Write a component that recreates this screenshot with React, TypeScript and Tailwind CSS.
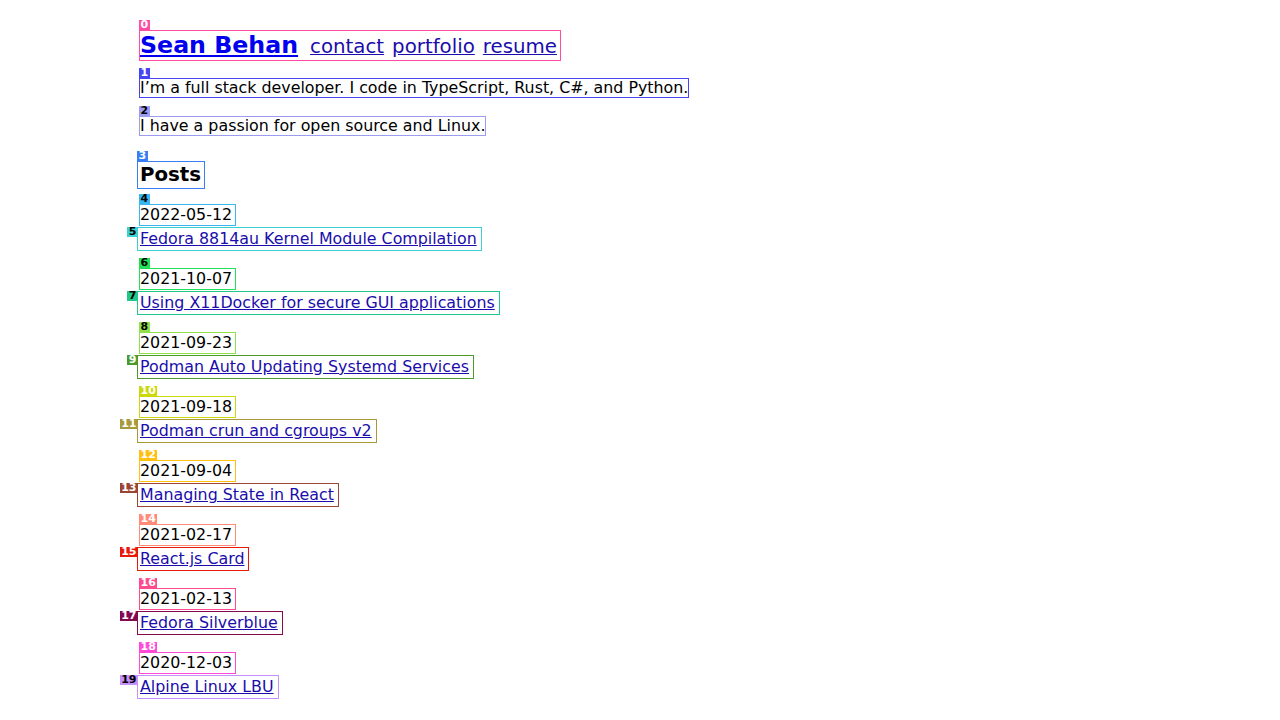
import React from "react";

type MarkProps = {
  n: number;
  box: string;
  label: string;
  side: "top" | "left";
  className?: string;
  children: React.ReactNode;
};

function Mark({ n, box, label, side, className, children }: MarkProps) {
  return (
    <div className={`relative border ${box} ${className ?? ""}`}>
      {children}
      <span
        className={`absolute flex h-[10px] items-center px-[1.5px] text-[11px] leading-[10px] font-bold tracking-normal ${label} ${
          side === "top" ? "left-[-1px] top-[-11px]" : "right-full top-[-1px]"
        }`}
      >
        {n}
      </span>
    </div>
  );
}

const posts = [
  {
    date: "2022-05-12",
    title: "Fedora 8814au Kernel Module Compilation",
    d: { box: "border-[#38b6f0]", label: "bg-[#38b6f0] text-black", side: "top" as const },
    l: { box: "border-[#3cd0d0]", label: "bg-[#3cd0d0] text-black", side: "left" as const },
  },
  {
    date: "2021-10-07",
    title: "Using X11Docker for secure GUI applications",
    d: { box: "border-[#22e055]", label: "bg-[#22e055] text-black", side: "top" as const },
    l: { box: "border-[#22c88a]", label: "bg-[#22c88a] text-black", side: "left" as const },
  },
  {
    date: "2021-09-23",
    title: "Podman Auto Updating Systemd Services",
    d: { box: "border-[#8fe04a]", label: "bg-[#8fe04a] text-black", side: "top" as const },
    l: { box: "border-[#4c9a2a]", label: "bg-[#4c9a2a] text-white", side: "left" as const },
  },
  {
    date: "2021-09-18",
    title: "Podman crun and cgroups v2",
    d: { box: "border-[#ccd80a]", label: "bg-[#ccd80a] text-white", side: "top" as const },
    l: { box: "border-[#a89a3a]", label: "bg-[#a89a3a] text-white", side: "left" as const },
  },
  {
    date: "2021-09-04",
    title: "Managing State in React",
    d: { box: "border-[#ffc010]", label: "bg-[#ffc010] text-white", side: "top" as const },
    l: { box: "border-[#9a4536]", label: "bg-[#9a4536] text-white", side: "left" as const },
  },
  {
    date: "2021-02-17",
    title: "React.js Card",
    d: { box: "border-[#ff8a78]", label: "bg-[#ff8a78] text-white", side: "top" as const },
    l: { box: "border-[#e81a08]", label: "bg-[#e81a08] text-white", side: "left" as const },
  },
  {
    date: "2021-02-13",
    title: "Fedora Silverblue",
    d: { box: "border-[#ff4a8c]", label: "bg-[#ff4a8c] text-white", side: "top" as const },
    l: { box: "border-[#840a50]", label: "bg-[#840a50] text-white", side: "left" as const },
  },
  {
    date: "2020-12-03",
    title: "Alpine Linux LBU",
    d: { box: "border-[#ff4ad8]", label: "bg-[#ff4ad8] text-white", side: "top" as const },
    l: { box: "border-[#c690ff]", label: "bg-[#c690ff] text-black", side: "left" as const },
  },
];

export default function App() {
  return (
    <div className="min-h-[720px] bg-white pl-[139px] pt-[30px] font-['DejaVu_Sans',sans-serif] text-black">
      <div className="flex flex-col items-start">
        <Mark n={0} box="border-[#ff4da6]" label="bg-[#ff4da6] text-white" side="top" className="flex h-[31px] items-baseline pr-[3px]">
          <a href="#" className="text-[23.7px] font-bold leading-[28px] text-[#0000ee] underline">
            Sean Behan
          </a>
          <a href="#" className="ml-[12px] text-[19.8px] leading-[28px] text-[#1a0dab] underline">
            contact
          </a>
          <a href="#" className="ml-[8px] text-[19.8px] leading-[28px] text-[#1a0dab] underline">
            portfolio
          </a>
          <a href="#" className="ml-[8px] text-[19.8px] leading-[28px] text-[#1a0dab] underline">
            resume
          </a>
        </Mark>

        <Mark n={1} box="border-[#4545f5]" label="bg-[#4545f5] text-white" side="top" className="mt-[17px] h-[20px] text-[15.85px] leading-[18px]">
          I’m a full stack developer. I code in TypeScript, Rust, C#, and Python.
        </Mark>

        <Mark n={2} box="border-[#9c9cf0]" label="bg-[#9c9cf0] text-black" side="top" className="mt-[18px] h-[20px] text-[15.85px] leading-[18px]">
          I have a passion for open source and Linux.
        </Mark>

        <Mark n={3} box="border-[#3a7ef5]" label="bg-[#3a7ef5] text-white" side="top" className="-ml-[2px] mt-[25px] h-[28px] pl-[2px] pr-[3px] text-[19.8px] font-bold leading-[26px]">
          Posts
        </Mark>

        {posts.map((p, i) => (
          <div key={p.date} className={`flex flex-col items-start ${i === 0 ? "mt-[15px]" : "mt-[17px]"}`}>
            <Mark n={4 + i * 2} box={p.d.box} label={p.d.label} side="top" className="h-[22px] pr-[3px] text-[15.85px] leading-[20px]">
              {p.date}
            </Mark>
            <Mark n={5 + i * 2} box={p.l.box} label={p.l.label} side="left" className="-ml-[2px] mt-[1px] flex h-[24px] items-center pl-[2px] pr-[4px]">
              <a href="#" className="text-[15.85px] leading-[20px] text-[#1a0dab] underline">
                {p.title}
              </a>
            </Mark>
          </div>
        ))}
      </div>
    </div>
  );
}
